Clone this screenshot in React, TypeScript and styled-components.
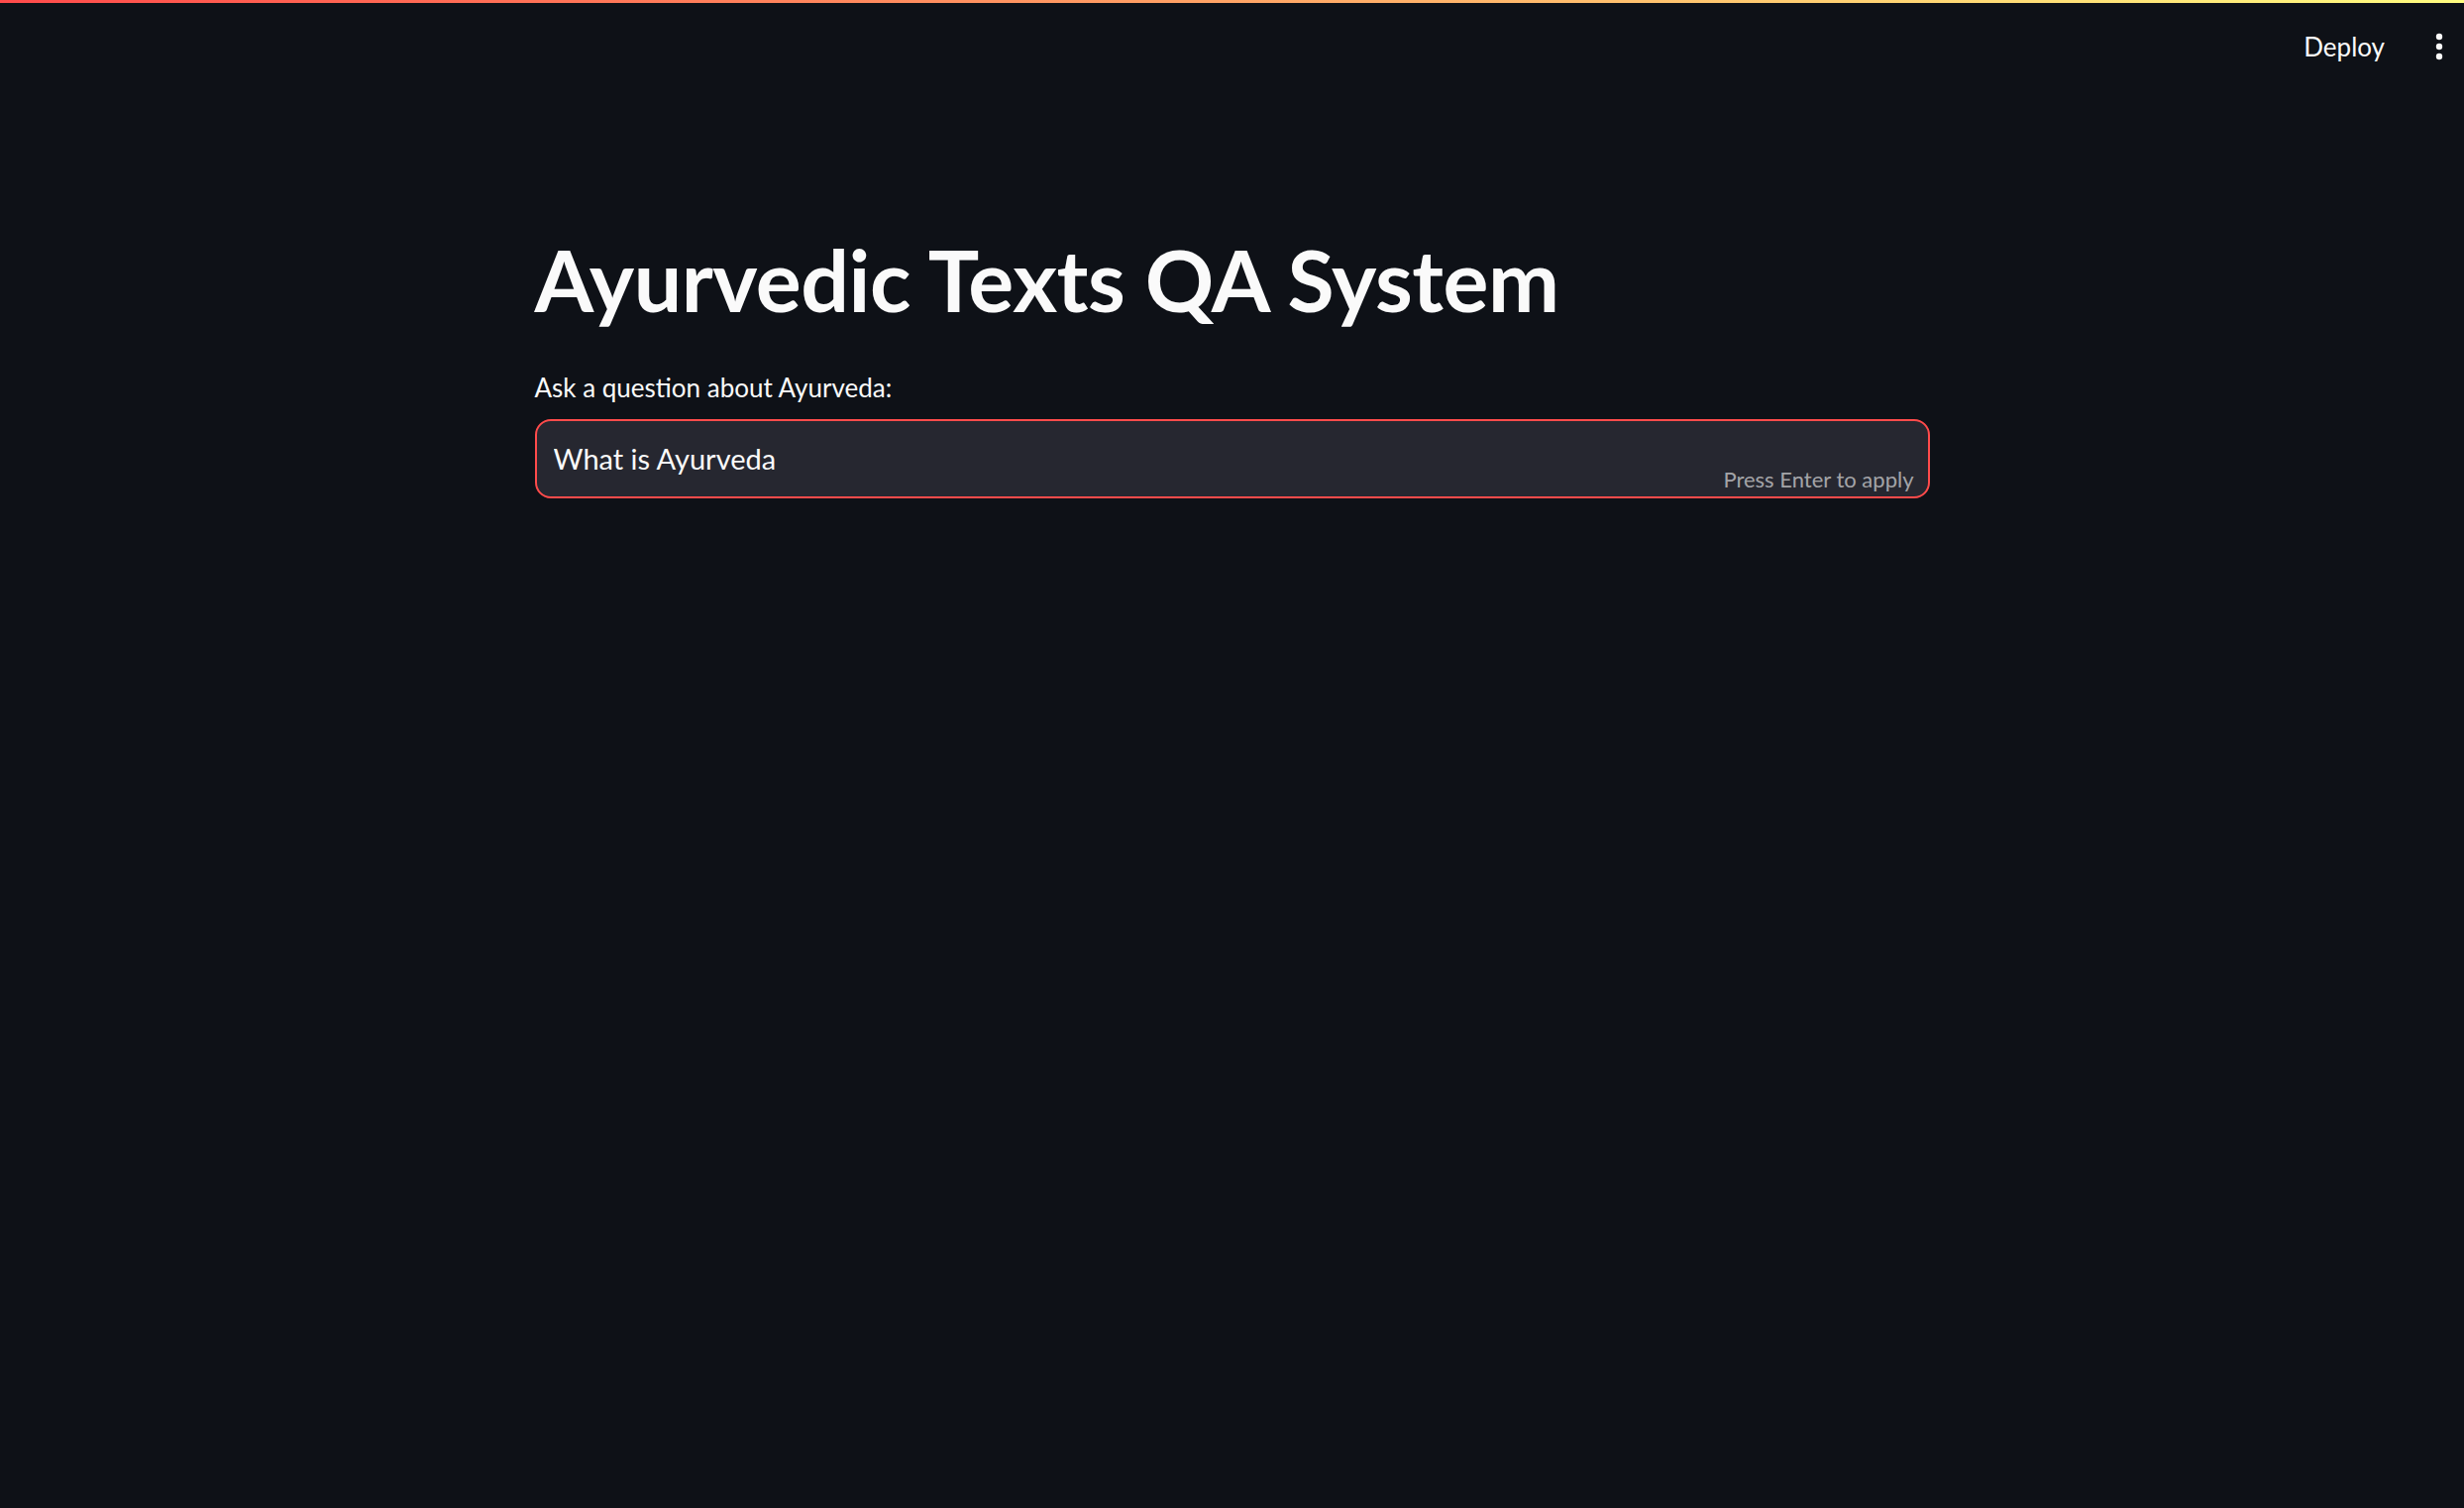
import React from "react";
import styled, { createGlobalStyle } from "styled-components";

const Global = createGlobalStyle`
  html, body { margin: 0; padding: 0; background: #0e1117; }
  body { font-family: Lato, "Noto Sans", sans-serif; color: #fafafa; min-height: 1522px; }
`;

const Page = styled.div`
  min-height: 1522px;
  background: #0e1117;
  display: flex;
  flex-direction: column;
`;

const Decoration = styled.div`
  height: 3px;
  background: linear-gradient(90deg, rgb(255, 75, 75), rgb(255, 253, 128));
`;

const Header = styled.header`
  height: 88px;
  display: flex;
  align-items: center;
  justify-content: flex-end;
  padding-right: 15px;
  gap: 45px;
`;

const DeployButton = styled.button`
  background: transparent;
  border: none;
  color: #fafafa;
  font-family: Lato, "Noto Sans", sans-serif;
  font-size: 26px;
  padding: 0;
  cursor: pointer;
`;

const MenuButton = styled.button`
  background: transparent;
  border: none;
  padding: 0;
  width: 20px;
  height: 32px;
  display: flex;
  align-items: center;
  justify-content: center;
  color: #fafafa;
`;

const Main = styled.main`
  width: 1408px;
  margin: 0 auto;
  padding-top: 139px;
  display: flex;
  flex-direction: column;
`;

const Title = styled.h1`
  margin: 0;
  font-size: 86px;
  font-weight: 700;
  line-height: 1.2;
  color: #fafafa;
  letter-spacing: -0.5px;
`;

const Label = styled.label`
  display: block;
  margin-top: 40px;
  font-size: 26px;
  line-height: 1.4;
  color: #fafafa;
`;

const InputBox = styled.div`
  margin-top: 13px;
  height: 80px;
  box-sizing: border-box;
  border: 2px solid #ff4b4b;
  border-radius: 16px;
  background: #262730;
  display: flex;
  align-items: center;
  position: relative;
  padding: 0 17px;
`;

const Field = styled.input`
  flex: 1;
  background: transparent;
  border: none;
  outline: none;
  color: #fafafa;
  font-family: Lato, "Noto Sans", sans-serif;
  font-size: 29px;
  padding: 0;
`;

const Hint = styled.div`
  position: absolute;
  right: 14px;
  bottom: 4px;
  font-size: 22px;
  color: rgba(250, 250, 250, 0.6);
`;

export default function App() {
  return (
    <Page>
      <Global />
      <Decoration />
      <Header>
        <DeployButton>Deploy</DeployButton>
        <MenuButton aria-label="menu">
          <svg width="8" height="28" viewBox="0 0 8 28">
            <circle cx="4" cy="4" r="3.2" fill="currentColor" />
            <circle cx="4" cy="14" r="3.2" fill="currentColor" />
            <circle cx="4" cy="24" r="3.2" fill="currentColor" />
          </svg>
        </MenuButton>
      </Header>
      <Main>
        <Title>Ayurvedic Texts QA System</Title>
        <Label htmlFor="q">Ask a question about Ayurveda:</Label>
        <InputBox>
          <Field id="q" defaultValue="What is Ayurveda" readOnly />
          <Hint>Press Enter to apply</Hint>
        </InputBox>
      </Main>
    </Page>
  );
}
